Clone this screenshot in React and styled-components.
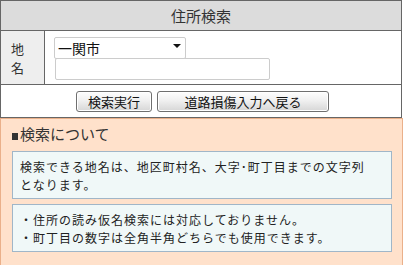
import styled, { createGlobalStyle } from "styled-components";

const GlobalStyle = createGlobalStyle`
    html, body {
        margin: 0;
        padding: 0;
        background: #ffffff;
    }

    body {
        font-family: "Noto Sans CJK JP", "Liberation Sans", sans-serif;
        color: #222222;
        width: 403px;
        overflow: hidden;
    }
`;

const App = () => {
    return (
        <>
            <GlobalStyle />
            <Page>
                <FormTable>
                    <Header>住所検索</Header>
                    <FieldRow>
                        <LabelCell>
                            <span>地</span>
                            <span>名</span>
                        </LabelCell>
                        <InputCell>
                            <SelectWrap>
                                <Select defaultValue="一関市">
                                    <option>一関市</option>
                                </Select>
                                <Arrow />
                            </SelectWrap>
                            <TextInput type="text" />
                        </InputCell>
                    </FieldRow>
                    <ButtonRow>
                        <Button $width={76}>検索実行</Button>
                        <Button $width={172}>道路損傷入力へ戻る</Button>
                    </ButtonRow>
                </FormTable>
                <InfoPanel>
                    <InfoTitle>
                        <Square />
                        検索について
                    </InfoTitle>
                    <NoteBox>
                        <NoteLine>検索できる地名は、地区町村名、大字･町丁目までの文字列</NoteLine>
                        <NoteLine>となります。</NoteLine>
                    </NoteBox>
                    <NoteBox>
                        <NoteLine>・住所の読み仮名検索には対応しておりません。</NoteLine>
                        <NoteLine>・町丁目の数字は全角半角どちらでも使用できます。</NoteLine>
                    </NoteBox>
                </InfoPanel>
            </Page>
        </>
    );
};

const Page = styled.div`
    width: 403px;
    display: flex;
    flex-direction: column;
`;

const FormTable = styled.div`
    width: 402px;
    box-sizing: border-box;
    border: 1px solid #666666;
    display: flex;
    flex-direction: column;
`;

const Header = styled.div`
    height: 29px;
    line-height: 29px;
    background: #dcdcdc;
    border-bottom: 1px solid #666666;
    text-align: center;
    font-size: 15px;
    color: #333333;
`;

const FieldRow = styled.div`
    display: flex;
    height: 53px;
    border-bottom: 1px solid #666666;
`;

const LabelCell = styled.div`
    width: 44px;
    background: #eeeeee;
    border-right: 1px solid #666666;
    display: flex;
    flex-direction: column;
    justify-content: center;
    padding-left: 10px;
    box-sizing: border-box;
    font-size: 13px;
    line-height: 19px;
    color: #333333;
`;

const InputCell = styled.div`
    display: flex;
    flex-direction: column;
    align-items: flex-start;
    gap: 1px;
    padding: 4px 0 0 9px;
`;

const SelectWrap = styled.div`
    position: relative;
    width: 132px;
    height: 22px;
`;

const Select = styled.select`
    appearance: none;
    width: 100%;
    height: 100%;
    margin: 0;
    padding: 0 0 0 3px;
    box-sizing: border-box;
    border: 1px solid #cccccc;
    border-radius: 2px;
    background: #ffffff;
    font-family: inherit;
    font-size: 14px;
    color: #111111;
    outline: none;
`;

const Arrow = styled.span`
    position: absolute;
    right: 5px;
    top: 9px;
    width: 0;
    height: 0;
    border-left: 4px solid transparent;
    border-right: 4px solid transparent;
    border-top: 4px solid #111111;
    pointer-events: none;
`;

const TextInput = styled.input`
    width: 215px;
    height: 22px;
    margin: 0 0 0 1px;
    padding: 0 3px;
    box-sizing: border-box;
    border: 1px solid #cccccc;
    border-radius: 2px;
    font-family: inherit;
    font-size: 13px;
    outline: none;
`;

const ButtonRow = styled.div`
    height: 32px;
    display: flex;
    justify-content: center;
    align-items: center;
    gap: 5px;
    padding-left: 3px;
`;

const Button = styled.button`
    width: ${(p) => p.$width}px;
    height: 21px;
    margin: 0;
    padding: 0;
    box-sizing: border-box;
    border: 1px solid #6f6f6f;
    border-radius: 3px;
    background: linear-gradient(#fdfdfd, #f0f0f0 45%, #d6d6d6);
    box-shadow: inset 0 0 0 1px #ffffff;
    font-family: inherit;
    font-size: 13px;
    line-height: 19px;
    color: #111111;
    cursor: pointer;
`;

const InfoPanel = styled.div`
    min-height: 150px;
    box-sizing: border-box;
    background: #ffe1cb;
    border: 1px solid #eab08a;
    padding: 6px 10px 12px 11px;
    display: flex;
    flex-direction: column;
    gap: 5px;
`;

const InfoTitle = styled.div`
    display: flex;
    align-items: center;
    font-size: 15px;
    line-height: 18px;
    color: #333333;
    margin-bottom: 3px;
`;

const Square = styled.span`
    display: inline-block;
    width: 6px;
    height: 7px;
    margin: 4px 2px 0 0;
    background: #333333;
`;

const NoteBox = styled.div`
    background: #f0f8f8;
    border: 1px solid #a0b6c8;
    padding: 6px 7px 4px 7px;
    display: flex;
    flex-direction: column;
`;

const NoteLine = styled.div`
    font-size: 12px;
    letter-spacing: 1px;
    line-height: 18px;
    color: #222222;
    white-space: nowrap;
`;

export default App;
